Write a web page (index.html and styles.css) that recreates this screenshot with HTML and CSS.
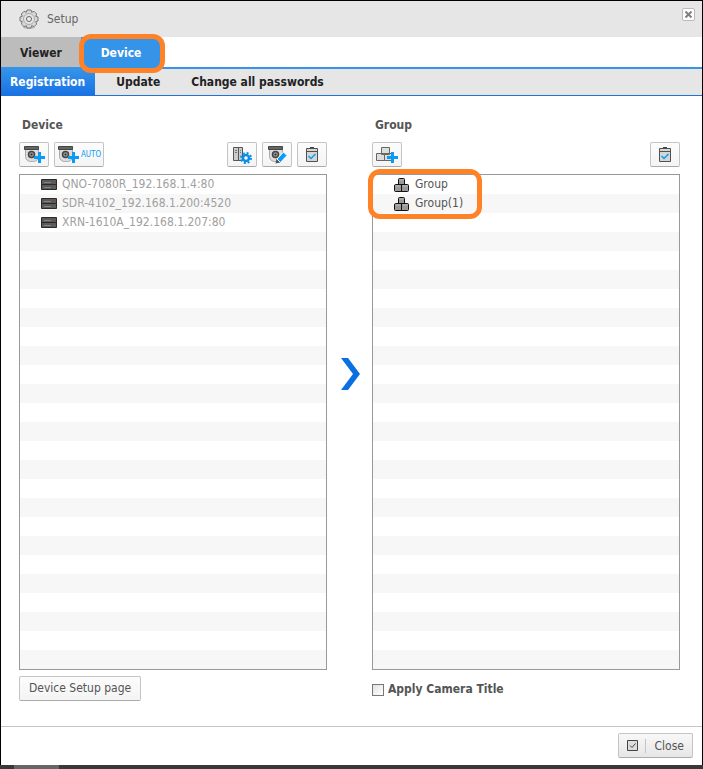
FILE: index.html
```html
<!doctype html>
<html lang="en">
<head>
<meta charset="utf-8">
<meta name="viewport" content="width=device-width, initial-scale=1">
<title>Setup</title>
<link rel="stylesheet" href="styles.css">
</head>

<body>

<!-- shared icons -->
<svg class="defs" width="0" height="0" aria-hidden="true">
 <symbol id="camera" viewBox="0 0 22 18">
  <path d="M2.500 3.500h13v7a5 5 0 0 1-5 5h-3a5 5 0 0 1-5-5z" fill="#dcdcdc" stroke="#aaa"/>
  <path d="M1.500.5h14v3h-14z" fill="#666" stroke="#444"/>
  <circle cx="8.500" cy="8.500" r="3" fill="#999" stroke="#444" stroke-width="1.500"/>
  <circle cx="8.500" cy="8.500" r="1" fill="#333"/>
 </symbol>
 <symbol id="plus" viewBox="0 0 11 11">
  <path d="M4 0h3v4h4v3H7v4H4V7H0V4h4z" fill="#0a9cf5"/>
 </symbol>
 <symbol id="check" viewBox="0 0 12 15">
  <path d="M4 0h4v1H4z" fill="#444"/>
  <path d="M.5 1.500h11v13H.5z" fill="#d6d6d6" stroke="#505050"/>
  <path d="M1 4.500h10" stroke="#505050"/>
  <path d="M2.500 9l2.500 2.500L9.500 7" fill="none" stroke="#0a9cf5" stroke-width="1.500"/>
 </symbol>
 <symbol id="recorder" viewBox="0 0 16 11">
  <path d="M.5.5h15v10H.5z" fill="#5a5a5a" stroke="#2a2a2a"/>
  <path d="M1 5.500h14" stroke="#2a2a2a"/>
  <path d="M3 3.500h7M3 8.500h7" stroke="#858585"/>
  <path d="M13 3h1v1h-1z" fill="#c22"/>
  <path d="M13 8h1v1h-1z" fill="#2a2"/>
 </symbol>
 <symbol id="blocks" viewBox="0 0 15 14">
  <path d="M4.500 1.500q0-1 1-1h4q1 0 1 1v5h-6zM.5 8q0-1.500 1-1.500h6v7h-6q-1 0-1-1zM7.500 6.500h6q1 0 1 1v5q0 1-1 1h-6z" fill="#999" stroke="#111"/>
  <path d="M5.500 2h4M1.500 8h5M8.500 8h5" stroke="#bbb"/>
 </symbol>
</svg>

<div class="window">

<header class="titlebar">
 <svg class="gear" viewBox="0 0 20 20" width="20" height="20">
  <ellipse cx="10" cy="18.500" rx="6" ry="1.500" fill="#bbb"/>
  <path d="M8 1h4l.7 2.300 2.300-1 2.700 2.700-1 2.300L19 8v4l-2.300.7 1 2.300-2.700 2.700-2.300-1L12 19H8l-.7-2.300-2.300 1L2.300 15l1-2.300L1 12V8l2.300-.7-1-2.300L5 2.300l2.300 1z" fill="#d8d8d8" stroke="#777" stroke-linejoin="round"/>
  <circle cx="10" cy="10" r="5.500" fill="#e4e4e4" stroke="#aaa"/>
  <circle cx="10" cy="10" r="2.500" fill="#eee" stroke="#666"/>
 </svg>
 <h1>Setup</h1>
 <button type="button" class="x" aria-label="Close window">
  <svg viewBox="0 0 7 7" width="7" height="7"><path d="M.5.5l6 6M6.500.5l-6 6" stroke="#808080" stroke-width="2"/></svg>
 </button>
</header>

<nav class="tabs">
 <a href="#viewer">Viewer</a>
 <a href="#device" class="active">Device</a>
</nav>

<nav class="subtabs">
 <a href="#registration" class="active">Registration</a>
 <a href="#update">Update</a>
 <a href="#passwords">Change all passwords</a>
</nav>

<main>
 <section class="panel">
  <h2>Device</h2>
  <div class="toolbar">
   <button type="button" class="button icon" aria-label="Add device">
    <svg viewBox="0 0 22 18" width="22" height="18"><use href="#camera" width="22" height="18"/><use href="#plus" x="11" y="6" width="11" height="11"/></svg>
   </button>
   <button type="button" class="button icon auto">
    <svg viewBox="0 0 22 18" width="22" height="18"><use href="#camera" width="22" height="18"/><use href="#plus" x="11" y="6" width="11" height="11"/></svg>
    <span>AUTO</span>
   </button>
   <button type="button" class="button icon first-right" aria-label="Device settings">
    <svg viewBox="0 0 20 18" width="20" height="18">
     <path d="M1.500 1.500h5v13h-5zM6.500 1.500h4v13h-4z" fill="#ccc" stroke="#555"/>
     <path d="M3 4.500h2M3 6.500h2M8 4.500h1M8 6.500h1" stroke="#777"/>
     <circle cx="14" cy="12" r="3" fill="#fff" stroke="#0a8fe8" stroke-width="2.500"/>
     <circle cx="14" cy="12" r="5" fill="none" stroke="#0a8fe8" stroke-width="2" stroke-dasharray="2 1.927"/>
    </svg>
   </button>
   <button type="button" class="button icon" aria-label="Edit device">
    <svg viewBox="0 0 20 18" width="20" height="18">
     <use href="#camera" width="22" height="18"/>
     <path d="M8.500 17.500l1-5 4 4z" fill="#555"/>
     <path d="M10 13l6.500-7 3.500 3.500-6.500 7z" fill="#0a9cf5" stroke="#fff"/>
    </svg>
   </button>
   <button type="button" class="button icon" aria-label="Select all devices">
    <svg width="12" height="15"><use href="#check"/></svg>
   </button>
  </div>
  <ul class="list">
   <li><svg width="16" height="11"><use href="#recorder"/></svg>QNO-7080R_192.168.1.4:80</li>
   <li><svg width="16" height="11"><use href="#recorder"/></svg>SDR-4102_192.168.1.200:4520</li>
   <li><svg width="16" height="11"><use href="#recorder"/></svg>XRN-1610A_192.168.1.207:80</li>
  </ul>
  <div class="below">
   <button type="button" class="button">Device Setup page</button>
  </div>
 </section>

 <svg class="arrow" viewBox="0 0 19 32" width="19" height="32"><path d="M0 0h7l12 16L7 32H0l12-16z" fill="#0a6fe0"/></svg>

 <section class="panel">
  <h2>Group</h2>
  <div class="toolbar">
   <button type="button" class="button icon" aria-label="Add group">
    <svg viewBox="0 0 22 18" width="22" height="18">
     <path d="M5.500 1.500h8v7h-8zM.5 7.500h8v7h-8zM8.500 7.500h8v7h-8z" fill="#ddd" stroke="#666"/>
     <use href="#plus" x="11" y="6" width="11" height="11"/>
    </svg>
   </button>
   <button type="button" class="button icon first-right" aria-label="Select all groups">
    <svg width="12" height="15"><use href="#check"/></svg>
   </button>
  </div>
  <ul class="list groups">
   <li><svg width="15" height="14"><use href="#blocks"/></svg>Group</li>
   <li><svg width="15" height="14"><use href="#blocks"/></svg>Group(1)</li>
  </ul>
  <div class="below">
   <label><input type="checkbox">Apply Camera Title</label>
  </div>
 </section>
</main>

<footer>
 <button type="button" class="button close">
  <svg viewBox="0 0 11 11" width="11" height="11"><path d="M.5.5h10v10H.5z" fill="#ddd" stroke="#444"/><path d="M3 5.500l2 2 3.500-4" fill="none" stroke="#444"/></svg>
  <span>Close</span>
 </button>
</footer>

</div>

<div class="taskbar"><span></span></div>

</body>
</html>
```
FILE: styles.css
```css
* { box-sizing: border-box; }

body {
	margin: 0;
	min-height: 100vh;
	display: flex;
	flex-direction: column;
	background: #fff;
	color: #555;
	font: 12px/19px "DejaVu Sans Condensed", "DejaVu Sans", sans-serif;
}

svg { display: block; flex: none; }
.defs { position: absolute; }
h1, h2 { margin: 0; font-size: 12px; }
a { text-decoration: none; }

.window {
	flex: 1;
	display: flex;
	flex-direction: column;
	border: 1px solid #000;
	border-bottom: 0;
}

.titlebar {
	display: flex;
	align-items: center;
	height: 36px;
	padding: 0 7px 0 18px;
	background: #e6e6e6;
}
.titlebar h1 {
	margin-left: 8px;
	font-weight: normal;
	color: #666;
}
.x {
	display: flex;
	align-items: center;
	justify-content: center;
	width: 13px;
	height: 13px;
	margin: 0 0 9px auto;
	padding: 0;
	border: 1px solid #bbb;
	border-radius: 2px;
	background: #fff;
}

.tabs {
	display: flex;
	height: 32px;
	border-bottom: 2px solid #3593e8;
	font-weight: bold;
	line-height: 32px;
}
.tabs a {
	width: 80px;
	height: 30px;
	text-align: center;
	background: #bcbcbc;
	color: #222;
}
.tabs .active {
	position: relative;
	background: #3593e8;
	color: #fff;
}

/* orange highlight round the current step */
.tabs .active::after,
.groups::after {
	content: "";
	position: absolute;
	border: 5px solid #ff8227;
	border-radius: 12px;
	pointer-events: none;
}
.tabs .active::after {
	top: -3px;
	right: -4px;
	bottom: -6px;
	left: -2px;
}
.groups::after {
	top: -6px;
	left: -5px;
	width: 104px;
	height: 40px;
}

.subtabs {
	display: flex;
	gap: 11px;
	height: 27px;
	border-bottom: 1px solid #2272d6;
	background: #e6e6e6;
	font-weight: bold;
	line-height: 26px;
}
.subtabs a {
	padding: 0 10px;
	color: #222;
}
.subtabs .active {
	padding-left: 9px;
	background: linear-gradient(#3593e8, #1872e6);
	color: #fff;
}

main {
	flex: 1;
	display: flex;
	align-items: stretch;
	padding: 20px 22px 25px 18px;
}
.panel {
	flex: 1 1 0;
	display: flex;
	flex-direction: column;
}
.panel h2 { padding-left: 3px; }
.arrow {
	align-self: center;
	margin: 0 12px 69px 14px;
}

.toolbar {
	display: flex;
	gap: 5px;
	margin: 7px 0;
}
.first-right { margin-left: auto; }

.button {
	display: flex;
	align-items: center;
	justify-content: center;
	height: 25px;
	padding: 0 9px;
	border: 1px solid #c4c4c4;
	border-bottom-color: #aaa;
	border-radius: 2px;
	background: linear-gradient(#fcfcfc, #f4f4f4);
	color: #555;
	font: inherit;
}
.icon {
	width: 30px;
	padding: 0;
}
.auto {
	gap: 2px;
	width: 50px;
	color: #0a9cf5;
	font-size: 8px;
}

.list {
	position: relative;
	flex: 1;
	min-height: 116px;
	margin: 0;
	padding: 0;
	border: 1px solid #999;
	background: repeating-linear-gradient(#fff 0 19px, #f7f7f7 19px 38px);
	list-style: none;
	color: #a0a0a0;
}
.list li {
	display: flex;
	align-items: center;
	gap: 5px;
	padding-left: 21px;
}
.groups { color: #555; }
.groups li { gap: 6px; }

.below {
	display: flex;
	align-items: center;
	height: 25px;
	margin-top: 6px;
}
.below label {
	display: flex;
	align-items: center;
	gap: 4px;
	padding-top: 2px;
	font-weight: bold;
}
.below input {
	appearance: none;
	width: 12px;
	height: 12px;
	margin: 0;
	border: 1px solid #777;
	background: linear-gradient(135deg, #e2e2e2, #fff);
}
.below input:checked { background: #3593e8; }

footer {
	display: flex;
	justify-content: flex-end;
	padding: 6px 9px 7px;
	border-top: 1px solid #c4c4c4;
}
.close {
	padding: 0 8px;
	background: linear-gradient(#f8f8f8, #e6e6e6);
}
.close span {
	margin-left: 7px;
	padding-left: 9px;
	border-left: 1px solid #c4c4c4;
	line-height: 14px;
}

.taskbar {
	height: 4px;
	padding-left: 14px;
	background: #393939;
}
.taskbar span {
	display: block;
	width: 45px;
	height: 4px;
	background: #666;
}
```
